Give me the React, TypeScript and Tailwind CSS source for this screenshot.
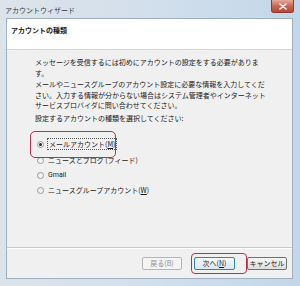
import React from "react";

const font = { fontFamily: '"Noto Sans CJK JP", "Noto Sans", sans-serif' };

function Radio({ checked }: { checked?: boolean }) {
  return (
    <span className="w-[7px] h-[7px] rounded-full border border-[#9a9a9a] bg-gradient-to-br from-[#e8e8e8] to-[#ffffff] flex items-center justify-center shrink-0">
      {checked && <span className="w-[3px] h-[3px] rounded-full bg-[#2a2a2a]" />}
    </span>
  );
}

export default function App() {
  return (
    <div
      className="w-[300px] h-[286px] bg-gradient-to-r from-[#dde3ea] via-[#d2dfec] to-[#c2d7ea] flex flex-col overflow-hidden text-[#1a1a1a]"
      style={font}
    >
      {/* title bar */}
      <div className="h-[18px] flex items-start justify-between shrink-0">
        <div className="pl-[5px] pt-[5px] text-[7px] leading-[10px] text-[#3a3a3a] whitespace-nowrap">
          アカウントウィザード
        </div>
        <div className="mr-[6px] w-[23px] h-[13px] rounded-b-[3px] border border-t-0 border-[#8a3a30] bg-gradient-to-b from-[#e6a898] via-[#cc6450] to-[#b84a36] flex items-center justify-center">
          <svg width="8" height="7" viewBox="0 0 8 7">
            <path d="M1 1 L7 6 M7 1 L1 6" stroke="#ffffff" strokeWidth="1.6" strokeLinecap="round" />
          </svg>
        </div>
      </div>

      {/* client */}
      <div className="ml-[6px] mr-[7px] mb-[7px] flex-1 flex flex-col border border-[#9fb0c0] bg-[#f0f0f0]">
        {/* header */}
        <div className="h-[31px] bg-white border-b border-[#d5d5d5] pl-[4px] pt-[6px] shrink-0">
          <div className="text-[7px] leading-[10px] font-bold whitespace-nowrap">アカウントの種類</div>
        </div>

        {/* body */}
        <div className="flex-1 pl-[28px] pt-[7px] text-[7px] leading-[10.5px] whitespace-nowrap">
          <div>
            メッセージを受信するには初めにアカウントの設定をする必要がありま
            <br />
            す。
          </div>
          <div className="mt-[1px]">
            メールやニュースグループのアカウント設定に必要な情報を入力してくだ
            <br />
            さい。入力する情報が分からない場合はシステム管理者やインターネット
            <br />
            サービスプロバイダに問い合わせてください。
          </div>
          <div className="mt-[2.5px]">設定するアカウントの種類を選択してください:</div>

          <div className="mt-[13px] flex flex-col">
            <div className="relative h-[15px] flex items-center pl-[2px] gap-[3px]">
              <Radio checked />
              <span className="border border-dotted border-[#555] px-[1px] leading-[10px]">
                メールアカウント(<span className="underline">M</span>)
              </span>
              <span className="absolute left-[-5px] top-[-6px] w-[86px] h-[27px] rounded-[5px] border-[1.5px] border-[#b8324e]" />
            </div>
            <div className="h-[15px] flex items-center pl-[2px] gap-[4px] mt-[1px]">
              <Radio />
              <span>
                ニュースとブログ (フィード)
              </span>
            </div>
            <div className="h-[15px] flex items-center pl-[2px] gap-[4px]">
              <Radio />
              <span className="font-[Roboto]">Gmail</span>
            </div>
            <div className="h-[15px] flex items-center pl-[2px] gap-[4px]">
              <Radio />
              <span>
                ニュースグループアカウント(<span className="underline">W</span>)
              </span>
            </div>
          </div>
        </div>

        {/* footer */}
        <div className="border-t border-[#c9c9c9] shadow-[inset_0_1px_0_#ffffff] h-[31px] shrink-0 flex items-start justify-end pr-[5px] pt-[9px] gap-[12px] text-[7px]">
          <div className="w-[40px] h-[13px] border border-[#b5b5b5] rounded-[2px] bg-[#f4f4f4] text-[#8d8d8d] flex items-center justify-center whitespace-nowrap">
            戻る(B)
          </div>
          <div className="relative w-[41px] h-[13px] border border-[#3c7fb1] rounded-[2px] bg-gradient-to-b from-[#f2f8fc] to-[#d6e8f5] flex items-center justify-center whitespace-nowrap">
            次へ(<span className="underline">N</span>)
            <span className="absolute left-[-4px] top-[-5px] w-[56px] h-[21px] rounded-[4px] border-[1.5px] border-[#b8324e]" />
          </div>
          <div className="w-[40px] h-[13px] border border-[#707070] rounded-[2px] bg-gradient-to-b from-[#f6f6f6] to-[#dedede] flex items-center justify-center whitespace-nowrap">
            キャンセル
          </div>
        </div>
      </div>
    </div>
  );
}
